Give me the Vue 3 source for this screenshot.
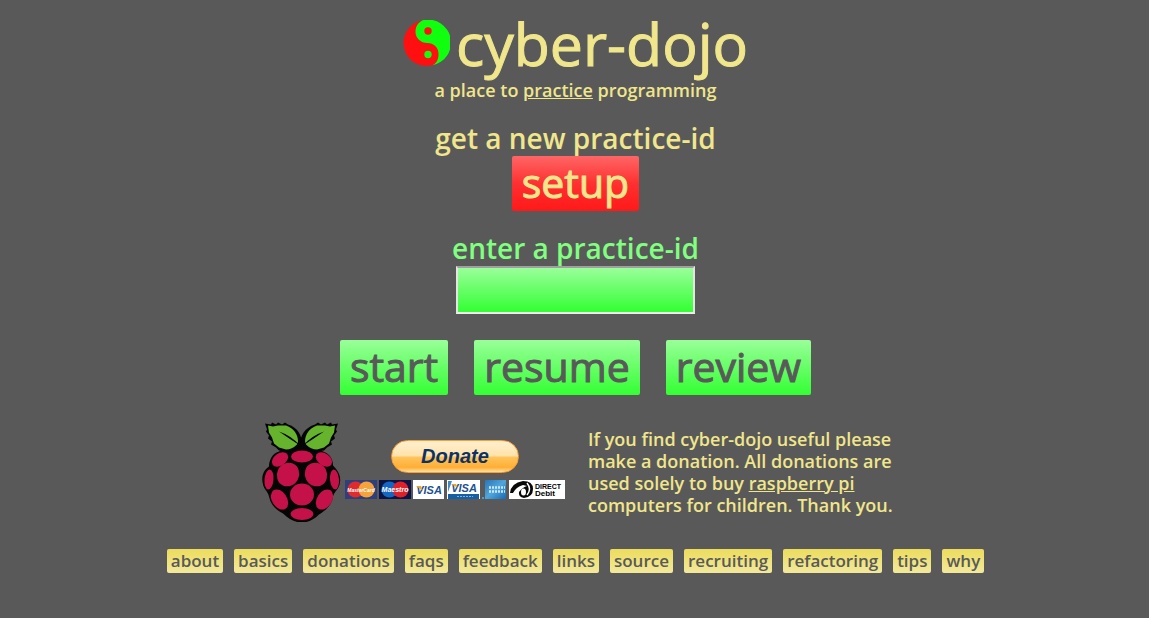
<script setup>
import { ref } from 'vue'

const practiceId = ref('')
const actions = ['start', 'resume', 'review']
const pages = [
  'about', 'basics', 'donations', 'faqs', 'feedback', 'links',
  'source', 'recruiting', 'refactoring', 'tips', 'why',
]
</script>

<template>
  <main class="home">
    <h1 class="title">
      <svg class="logo" viewBox="0 0 46 46" aria-hidden="true">
        <circle cx="23" cy="23" r="23" fill="#ff0f0f" />
        <path d="M20 0A23 23 0 0 1 29 45.200C34 43 35 38 35 34C35 27 30 23 24 23C17 23 12 18 12 12C12 6 15 2 20 0Z" fill="#0fff0f" />
        <circle cx="24.500" cy="11" r="3.700" fill="#ff0f0f" />
        <circle cx="24.500" cy="34.500" r="3.700" fill="#0fff0f" />
      </svg>
      <span>cyber-dojo</span>
    </h1>
    <p class="tagline">a place to <a href="#practice">practice</a> programming</p>

    <section class="block">
      <h2 class="heading">get a new practice-id</h2>
      <button type="button" class="big setup">setup</button>
    </section>

    <section class="block">
      <label class="heading enter" for="practice-id">enter a practice-id</label>
      <input id="practice-id" v-model="practiceId" class="entry" type="text" autocomplete="off" />
    </section>

    <div class="actions">
      <button v-for="action in actions" :key="action" type="button" class="big go">{{ action }}</button>
    </div>

    <section class="giving">
      <svg class="berry" viewBox="0 0 80 100" aria-hidden="true">
        <path d="M41 16L30 25C24 26 21 28 18 30C11 32 8 39 8 45C2 49 0 56 2 63C3 68 7 70 8 75C10 84 15 88 22 92C28 98 34 101 41 101C47 101 53 98 58 93C66 88 71 83 72 75C73 70 78 68 79 61C80 54 77 49 72 44C72 38 69 32 62 30C59 28 56 26 52 25Z" fill="#050505" />
        <path d="M41 23C41 14 37 6 27 3L24 1L21 3L17 1L15 3L11 1L10 3L4 2L6 8L5 10L8 14L7 17L11 20L10 23L15 26L18 29L25 30Q35 29 41 23Z" fill="#050505" />
        <path d="M39 23C39 14 44 6 54 3L57 1L60 3L64 1L66 3L70 1L71 3L77 2L75 8L76 10L73 14L74 17L70 20L71 23L66 26L63 29L56 30Q46 29 39 23Z" fill="#050505" />
        <path d="M7 4L12 5L17 4L25 4C33 7 37 13 37 20L36 23Q31 28 25 28L18 26L13 22L11 16L8 11Z" fill="#66b32e" />
        <path d="M74 4L69 5L64 4L56 4C48 7 44 13 44 20L45 23Q50 28 56 28L63 26L68 22L70 16L73 11Z" fill="#66b32e" />
        <path d="M18 10Q30 14 39 24Q28 17 18 10ZM63 10Q51 14 42 24Q53 17 63 10Z" fill="#050505" />
        <g fill="#c5114a">
          <ellipse cx="41" cy="35" rx="11" ry="6" />
          <ellipse cx="19" cy="38" rx="9" ry="6" transform="rotate(-35 19 38)" />
          <ellipse cx="63" cy="38" rx="9" ry="6" transform="rotate(35 63 38)" />
          <ellipse cx="27" cy="53" rx="11" ry="12" transform="rotate(25 27 53)" />
          <ellipse cx="55" cy="53" rx="11" ry="12" transform="rotate(-25 55 53)" />
          <ellipse cx="41" cy="73" rx="12" ry="11" />
          <ellipse cx="8" cy="58" rx="4.500" ry="10" transform="rotate(5 8 58)" />
          <ellipse cx="73.500" cy="58" rx="4.500" ry="10" transform="rotate(-5 73.500 58)" />
          <ellipse cx="18.500" cy="78" rx="7.500" ry="11" transform="rotate(-33 18.500 78)" />
          <ellipse cx="63.500" cy="78" rx="7.500" ry="11" transform="rotate(33 63.500 78)" />
          <ellipse cx="41" cy="92.500" rx="11.500" ry="6" />
        </g>
      </svg>

      <div class="payment">
        <button type="button" class="donate">Donate</button>
        <svg class="cards" viewBox="0 0 220 20" role="img" aria-label="Accepted cards">
          <defs>
            <linearGradient id="amex" x1="0" y1="0" x2="1" y2="1">
              <stop offset="0" stop-color="#2a74b8" />
              <stop offset=".5" stop-color="#4fa6dc" />
              <stop offset="1" stop-color="#1769b4" />
            </linearGradient>
          </defs>
          <rect width="32" height="19" fill="#2f3f7c" />
          <circle cx="10.500" cy="9.500" r="8" fill="#e12a2c" />
          <circle cx="21.500" cy="9.500" r="8" fill="#f5a33a" />
          <text x="16" y="12" font-size="5" text-anchor="middle" class="mark" fill="#fff">MasterCard</text>
          <rect x="34" width="32" height="19" fill="#0c1445" />
          <circle cx="44.500" cy="9.500" r="8" fill="#1266c4" />
          <circle cx="55.500" cy="9.500" r="8" fill="#df2029" />
          <text x="50" y="12" font-size="7" text-anchor="middle" class="mark" fill="#fff">Maestro</text>
          <rect x="68" width="31" height="19" fill="#fff" />
          <text x="84" y="14" font-size="11" text-anchor="middle" class="mark" fill="#1d5190">VISA</text>
          <path d="M71 6h5l2 5Z" fill="#eda62d" />
          <rect x="102" width="33" height="19" fill="#fff" />
          <rect x="103" y="14" width="31" height="5" fill="#1560a5" />
          <path d="M103 1h4l-4 11Z" fill="#3e8cc9" />
          <text x="119" y="12" font-size="11" text-anchor="middle" class="mark" fill="#1d5190">VISA</text>
          <path d="M106 4h5l2 4Z" fill="#eda62d" />
          <path d="M112 16.500h16" stroke="#7ab4df" stroke-dasharray="2 1" />
          <rect x="137" y="17" width="2" height="2" fill="#4b9ccc" />
          <rect x="140" width="21" height="19" fill="url(#amex)" />
          <path d="M144 7.500h16M144 11.500h16" stroke="#cbe8f7" stroke-width="2.500" stroke-dasharray="2 1" />
          <rect x="164" width="56" height="19" fill="#fff" />
          <path d="M165 13Q166 3 178 1Q188 1 188 9Q188 17 179 18Q173 17 174 12Q178 7 182 6L178 5Q171 7 168 13Z" fill="#080808" />
          <ellipse cx="178.500" cy="12" rx="2.500" ry="3.500" fill="#fff" />
          <path d="M182 3Q187 9 182 15" fill="none" stroke="#fff" stroke-width="1.500" />
          <text x="190" y="9" font-size="7" class="debit">DIRECT</text>
          <text x="190" y="16" font-size="8" class="debit">Debit</text>
        </svg>
      </div>

      <p class="appeal">
        If you find cyber-dojo useful please make a donation. All donations are
        used solely to buy <a href="#raspberry-pi">raspberry pi</a> computers for children. Thank you.
      </p>
    </section>

    <nav class="pages">
      <a v-for="page in pages" :key="page" :href="`#${page}`">{{ page }}</a>
    </nav>
  </main>
</template>

<style>
body {
  background: #595959;
}
</style>

<style scoped>
.home {
  display: flex;
  flex-direction: column;
  align-items: center;
  padding: 15px 15px 44px 17px;
  color: #f0e68c;
  font-family: "Trebuchet MS", "Open Sans", sans-serif;
  font-weight: 500;
}

.title {
  display: flex;
  gap: 6px;
  margin: 0 0 8px;
  font-size: 59px;
  font-weight: 500;
  line-height: 56px;
  -webkit-text-stroke: 1px currentColor;
}

.logo {
  width: 47px;
  height: 46px;
  margin-top: 5px;
}

.tagline {
  margin: 0;
  font-size: 18px;
  font-weight: 600;
  line-height: 22px;
}

.tagline a,
.appeal a {
  color: inherit;
}

.block {
  display: flex;
  flex-direction: column;
  align-items: center;
  margin-top: 21px;
}

.heading {
  margin: 0 0 2px;
  font-size: 28px;
  font-weight: 600;
  line-height: 32px;
}

.enter {
  color: #80ff80;
}

.big {
  height: 55px;
  padding: 0 10px 3px;
  border: 0;
  border-radius: 2px;
  font: inherit;
  font-size: 41px;
  line-height: 52px;
  cursor: pointer;
  -webkit-text-stroke: 1px currentColor;
}

.setup {
  color: #f0e68c;
  background: linear-gradient(#ff6666, #ff3030 50%, #ff1919);
}

.entry {
  box-sizing: border-box;
  width: 239px;
  height: 48px;
  padding: 0 8px;
  border: 2px solid;
  border-color: #a0a0a0 #e4e4e4 #eee;
  background: linear-gradient(#99ff99, #33ff33);
  color: #595959;
  font: inherit;
  font-size: 36px;
}

.actions {
  display: flex;
  gap: 26px;
  margin-top: 26px;
}

.go {
  color: #595959;
  background: linear-gradient(#99ff99, #33ff33);
}

.giving {
  display: flex;
  align-items: center;
  margin-top: 26px;
}

.berry {
  width: 80px;
  height: 101px;
}

.payment {
  display: flex;
  flex-direction: column;
  align-items: center;
  gap: 7px;
  margin: 0 23px 0 4px;
  padding-bottom: 4px;
}

.donate {
  width: 128px;
  height: 33px;
  padding: 0;
  border: 1px solid #ff9d2e;
  border-radius: 17px;
  background: linear-gradient(#fff0d0, #ffe2ab 48%, #ffc45c 52%, #ffae35 85%, #ffe0a0);
  color: #0b3266;
  font: italic bold 20px/30px "Liberation Sans", Arial, sans-serif;
  cursor: pointer;
}

.cards {
  width: 220px;
  height: 20px;
}

.mark {
  font-family: "Liberation Sans", Arial, sans-serif;
  font-style: italic;
  font-weight: bold;
}

.debit {
  font-family: "Liberation Sans", Arial, sans-serif;
  font-weight: bold;
}

.appeal {
  width: 310px;
  margin: 0 -8px 0 0;
  font-size: 18px;
  font-weight: 600;
  line-height: 22px;
}

.pages {
  display: flex;
  flex-wrap: wrap;
  justify-content: center;
  gap: 11px;
  margin-top: 27px;
}

.pages a {
  padding: 0 4px;
  border-radius: 2px;
  background: linear-gradient(#ecdc5c, #f2e99c);
  color: #595959;
  font-size: 17px;
  font-weight: 600;
  line-height: 24px;
  text-decoration: none;
}
</style>
